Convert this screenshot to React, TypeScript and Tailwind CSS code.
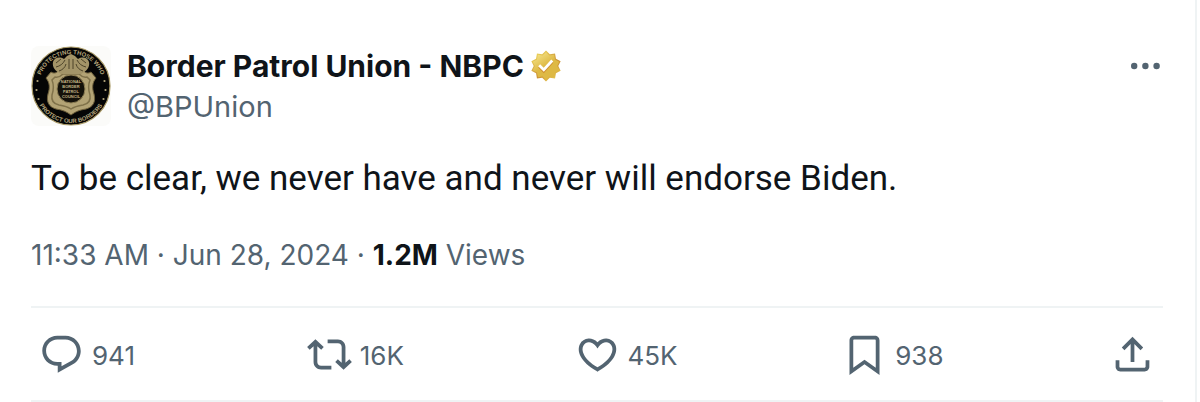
import React from "react";

const ICONS = {
  reply:
    "M1.751 10c0-4.42 3.584-8 8.005-8h4.366c4.49 0 8.129 3.64 8.129 8.13 0 2.96-1.607 5.68-4.196 7.11l-8.054 4.46v-3.69h-.067c-4.49.1-8.183-3.51-8.183-8.01zm8.005-6c-3.317 0-6.005 2.69-6.005 6 0 3.37 2.77 6.08 6.138 6.01l.351-.01h1.761v2.3l5.087-2.81c1.951-1.08 3.163-3.13 3.163-5.36 0-3.39-2.744-6.13-6.129-6.13H9.756z",
  repost:
    "M4.5 3.88l4.432 4.14-1.364 1.46L5.5 7.55V16c0 1.1.896 2 2 2H13v2H7.5c-2.209 0-4-1.79-4-4V7.55L1.432 9.48.068 8.02 4.5 3.88zM16.5 6H11V4h5.5c2.209 0 4 1.79 4 4v8.45l2.068-1.93 1.364 1.46-4.432 4.14-4.432-4.14 1.364-1.46 2.068 1.93V8c0-1.1-.896-2-2-2z",
  like: "M16.697 5.5c-1.222-.06-2.679.51-3.89 2.16l-.805 1.09-.806-1.09C9.984 6.01 8.526 5.44 7.304 5.5c-1.243.07-2.349.78-2.91 1.91-.552 1.12-.633 2.78.479 4.82 1.074 1.97 3.257 4.27 7.129 6.61 3.87-2.34 6.052-4.64 7.126-6.61 1.111-2.04 1.03-3.7.477-4.82-.561-1.13-1.666-1.84-2.908-1.91zm4.187 7.69c-1.351 2.48-4.001 5.12-8.379 7.67l-.503.3-.504-.3c-4.379-2.55-7.029-5.19-8.382-7.67-1.36-2.5-1.41-4.86-.514-6.67.887-1.79 2.647-2.91 4.601-3.01 1.651-.09 3.368.56 4.798 2.01 1.429-1.45 3.146-2.1 4.796-2.01 1.954.1 3.714 1.22 4.601 3.01.896 1.81.846 4.17-.514 6.67z",
  bookmark:
    "M4 4.5C4 3.12 5.119 2 6.5 2h11C18.881 2 20 3.12 20 4.5v18.44l-8-5.71-8 5.71V4.5zM6.5 4c-.276 0-.5.22-.5.5v14.56l6-4.29 6 4.29V4.5c0-.28-.224-.5-.5-.5h-11z",
  share:
    "M12 2.59l5.7 5.7-1.41 1.42L13 6.41V16h-2V6.41l-3.3 3.3-1.41-1.42L12 2.59zM21 15l-.02 3.51c0 1.38-1.12 2.49-2.5 2.49H5.5C4.11 21 3 19.88 3 18.5V15h2v3.5c0 .28.22.5.5.5h12.98c.28 0 .5-.22.5-.5L19 15h2z",
};

const Icon = ({ d }: { d: string }) => (
  <svg viewBox="0 0 24 24" className="size-[45px] shrink-0 fill-current" aria-hidden="true">
    <path d={d} />
  </svg>
);

const Action = ({ d, count, label }: { d: string; count: string; label: string }) => (
  <div className="flex-1">
    <button type="button" aria-label={label} className="flex cursor-pointer items-center gap-2">
      <Icon d={d} />
      <span className="pt-0.5 text-[26px] leading-8">{count}</span>
    </button>
  </div>
);

const Avatar = () => (
  <svg viewBox="0 0 80 80" className="size-20 shrink-0" role="img" aria-label="NBPC seal">
    <defs>
      <path id="seal-top" d="M8 40a32 32 0 0 1 64 0" />
      <path id="seal-bottom" d="M3 40a37 37 0 0 0 74 0" />
    </defs>
    <rect width="80" height="80" rx="8" fill="#fbfbf9" />
    <circle cx="40" cy="40" r="39" fill="#050505" stroke="#a89864" strokeWidth="1.2" />
    <g fill="#b5a67c" fontFamily="Liberation Sans" fontWeight="700" fontSize="6" textAnchor="middle">
      <text>
        <textPath href="#seal-top" startOffset="50%">
          PROTECTING THOSE WHO
        </textPath>
      </text>
      <text>
        <textPath href="#seal-bottom" startOffset="50%">
          PROTECT OUR BORDERS
        </textPath>
      </text>
      <circle cx="6.5" cy="35" r="1.1" />
      <circle cx="5.5" cy="44" r="1.1" />
      <circle cx="7.5" cy="53" r="1.1" />
      <circle cx="73.5" cy="35" r="1.1" />
      <circle cx="74.5" cy="44" r="1.1" />
      <circle cx="72.5" cy="53" r="1.1" />
    </g>
    {/* shield */}
    <path
      d="M20 26c3 2 6 1 8-2h24c2 3 5 4 8 2l5 6c-4 5-4 10-2 16 2 8-1 13-8 15-7 1-11 3-15 6-4-3-8-5-15-6-7-2-10-7-8-15 2-6 2-11-2-16l5-6z"
      fill="#b3a375"
      stroke="#6e603b"
      strokeWidth="1"
    />
    <path
      d="M24 31c4 1 6-1 8-3h16c2 2 4 4 8 3l3 3c-2 5-2 9 0 15 1 6-2 9-7 10-6 1-9 2-12 4-3-2-6-3-12-4-5-1-8-4-7-10 2-6 2-10 0-15l3-3z"
      fill="none"
      stroke="#80724a"
      strokeWidth="1.5"
    />
    {/* eagle with folded wings */}
    <path
      d="M40 8l4 2 3 3c5-3 10-1 11 3 1 5-2 9-8 12H30c-6-3-9-7-8-12 1-4 6-6 11-3l3-3 4-2z"
      fill="#a39468"
    />
    <path
      d="M34 14c-2 4-5 6-9 7M35 18c-1 4-4 6-7 7M46 14c2 4 5 6 9 7M45 18c1 4 4 6 7 7M38 13v10M42 13v10M30 13l-5 4M50 13l5 4"
      fill="none"
      stroke="#4d4329"
      strokeWidth="1"
    />
    <circle cx="40" cy="43" r="14" fill="#14110a" stroke="#8d7e54" strokeWidth="1" />
    <g fill="#c2b387" fontFamily="Liberation Sans" fontWeight="700" fontSize="4" textAnchor="middle">
      <text x="40" y="37">NATIONAL</text>
      <text x="40" y="42">BORDER</text>
      <text x="40" y="47">PATROL</text>
      <text x="40" y="52">COUNCIL</text>
    </g>
  </svg>
);

const VerifiedBadge = () => (
  <svg viewBox="0 0 22 22" className="size-9 shrink-0" role="img" aria-label="Verified organization">
    <defs>
      <linearGradient id="badge-rim" x1="4" y1="2" x2="18" y2="20" gradientUnits="userSpaceOnUse">
        <stop stopColor="#f0dc5c" />
        <stop offset=".5" stopColor="#cf9a3c" />
        <stop offset=".6" stopColor="#cb8f30" />
        <stop offset="1" stopColor="#ecd458" />
      </linearGradient>
      <linearGradient id="badge-face" x1="5" y1="3" x2="16" y2="19" gradientUnits="userSpaceOnUse">
        <stop stopColor="#f5e48a" />
        <stop offset=".5" stopColor="#deb944" />
        <stop offset="1" stopColor="#deb944" />
      </linearGradient>
    </defs>
    <path
      d="M13.324 3.848L11 1.6 8.676 3.848l-3.201-.453-.559 3.184L2.06 8.095 3.48 11l-1.42 2.904 2.856 1.516.559 3.184 3.201-.452L11 20.4l2.324-2.248 3.201.452.559-3.184 2.856-1.516L18.52 11l1.42-2.905-2.856-1.516-.559-3.184z"
      fill="url(#badge-rim)"
    />
    <path
      d="M13.101 4.533L11 2.5 8.899 4.533l-2.895-.41-.505 2.88-2.583 1.37L4.2 11l-1.284 2.627 2.583 1.37.505 2.88 2.895-.41L11 19.5l2.101-2.033 2.895.41.505-2.88 2.583-1.37L17.8 11l1.284-2.627-2.583-1.37-.505-2.88z"
      fill="url(#badge-face)"
    />
    <path d="M6.23 11.98l3.43 3.43 5.8-6.33-1.12-1.02-4.74 5.16-2.3-2.29z" fill="#cf9030" />
    <path d="M6.23 11.08l3.43 3.43 5.8-6.33-1.25-1.16-4.62 5.03-2.17-2.16z" fill="#fff" />
  </svg>
);

const App = () => {
  return (
    <main className="mr-[3px] min-h-dvh border-r-2 border-[#eff3f4] bg-white pl-[31px] pr-8 pt-[46px] font-['Inter',sans-serif] text-[#536471]">
      <article>
        <header className="flex items-start gap-4">
          <a href="#profile">
            <Avatar />
          </a>
          <div className="min-w-0 flex-1">
            <div className="flex items-center gap-1">
              <a href="#profile" className="text-[30px] font-bold leading-10 text-[#0f1419]">
                Border Patrol Union - NBPC
              </a>
              <VerifiedBadge />
            </div>
            <a href="#profile" className="block text-[29px] leading-[42px]">
              @BPUnion
            </a>
          </div>
          <button type="button" aria-label="More" className="cursor-pointer">
            <svg viewBox="0 0 25 25" className="size-10 fill-current">
              <circle cx="7" cy="12.5" r="2" />
              <circle cx="14" cy="12.5" r="2" />
              <circle cx="21" cy="12.5" r="2" />
            </svg>
          </button>
        </header>

        <p className="mt-[27px] font-['Roboto',sans-serif] text-[35px] leading-12 text-[#0f1419]">
          To be clear, we never have and never will endorse Biden.
        </p>

        <div className="mt-8 text-[28px] leading-10">
          <a href="#status">
            <time dateTime="2024-06-28T11:33">11:33 AM · Jun 28, 2024</time>
          </a>
          {" · "}
          <span className="font-bold text-[#0f1419]">1.2M</span> Views
        </div>

        <div className="mt-[31px] flex items-center border-y-2 border-[#eff3f4] px-2 pb-[23px] pt-6">
          <Action d={ICONS.reply} count="941" label="941 Replies" />
          <Action d={ICONS.repost} count="16K" label="16K Reposts" />
          <Action d={ICONS.like} count="45K" label="45K Likes" />
          <Action d={ICONS.bookmark} count="938" label="938 Bookmarks" />
          <button type="button" aria-label="Share" className="cursor-pointer">
            <Icon d={ICONS.share} />
          </button>
        </div>
      </article>
    </main>
  );
};

export default App;
